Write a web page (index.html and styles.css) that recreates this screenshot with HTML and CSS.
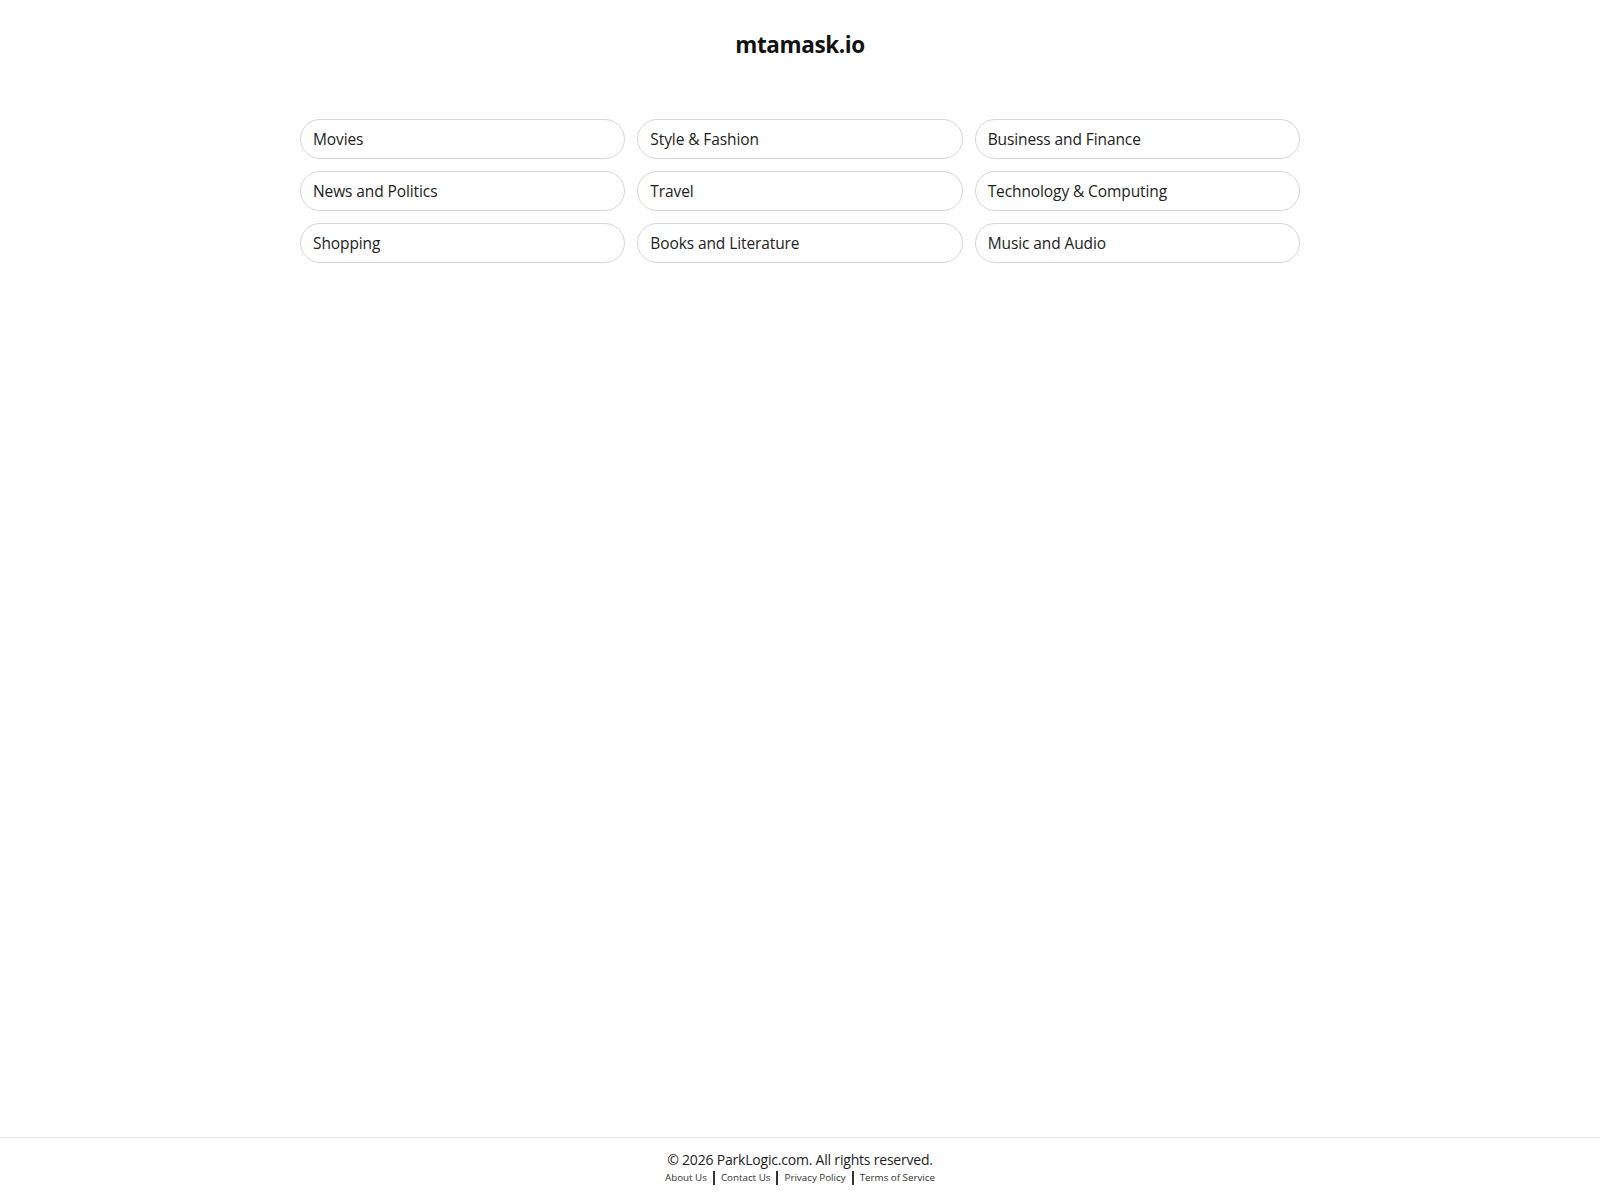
FILE: index.html
```html
<!DOCTYPE html>
<html lang="en">
<head>
    <meta charset="UTF-8">
    <meta name="viewport" content="width=device-width, initial-scale=1.0">
    <title>mtamask.io</title>
    <link rel="stylesheet" href="styles.css">
</head>
<body>
    <div class="page">
        <main class="content">
            <h1 class="domain">mtamask.io</h1>

            <div class="links">
                <a class="pill" href="#">Movies</a>
                <a class="pill" href="#">Style &amp; Fashion</a>
                <a class="pill" href="#">Business and Finance</a>
                <a class="pill" href="#">News and Politics</a>
                <a class="pill" href="#">Travel</a>
                <a class="pill" href="#">Technology &amp; Computing</a>
                <a class="pill" href="#">Shopping</a>
                <a class="pill" href="#">Books and Literature</a>
                <a class="pill" href="#">Music and Audio</a>
            </div>
        </main>

        <footer class="footer">
            <div class="copyright">&copy; 2026 ParkLogic.com. All rights reserved.</div>
            <nav class="footer-links">
                <a href="#">About Us</a>
                <a href="#">Contact Us</a>
                <a href="#">Privacy Policy</a>
                <a href="#">Terms of Service</a>
            </nav>
        </footer>
    </div>
</body>
</html>
```

FILE: styles.css
```css
body {
    font-family: 'Open Sans', 'Noto Sans', sans-serif;
    background-color: #fff;
    color: #222;
    margin: 0;
}
.page {
    min-height: 100vh;
    display: flex;
    flex-direction: column;
}
.content {
    flex: 1;
}
.domain {
    text-align: center;
    font-size: 22.5px;
    font-weight: 700;
    color: #111;
    margin: 29px 0 0;
    line-height: 32px;
    letter-spacing: -0.4px;
}
.links {
    width: 1000px;
    margin: 58px auto 0;
    display: grid;
    grid-template-columns: repeat(3, 1fr);
    gap: 12px 12px;
}
.pill {
    display: block;
    height: 38px;
    line-height: 38px;
    padding: 0 12px;
    border: 1px solid #d5d5dc;
    border-radius: 20px;
    color: #222;
    font-size: 15.5px;
    text-decoration: none;
    letter-spacing: -0.1px;
}
.footer {
    border-top: 1px solid #e6e6e6;
    text-align: center;
    padding: 11px 0 15px;
}
.copyright {
    font-size: 14px;
    color: #222;
    line-height: 22px;
    letter-spacing: -0.2px;
}
.footer-links {
    display: flex;
    justify-content: center;
    font-size: 9.8px;
    line-height: 14px;
}
.footer-links a {
    color: #333;
    text-decoration: none;
    padding: 0 6px;
    border-left: 2px solid #333;
}
.footer-links a:first-child {
    border-left: none;
}
```
